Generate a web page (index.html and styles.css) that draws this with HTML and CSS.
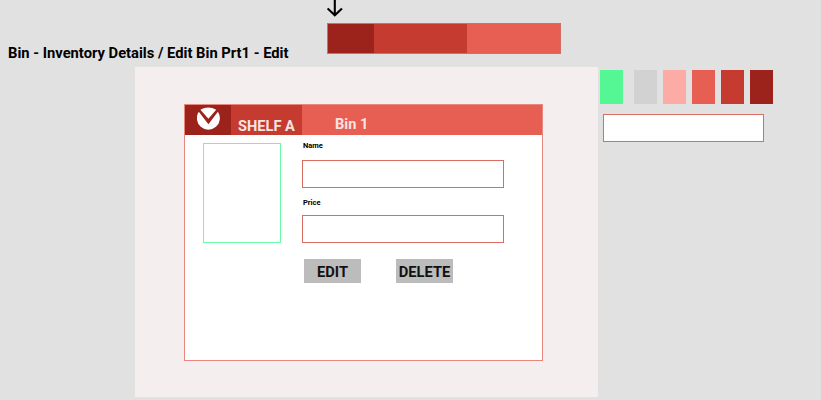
FILE: index.html
```html
<!DOCTYPE html>
<html lang="en">
<head>
<meta charset="utf-8">
<title>Bin - Inventory Details</title>
<link rel="stylesheet" href="styles.css">
</head>
<body>
<header class="top">
  <h1 class="title">Bin - Inventory Details / Edit Bin Prt1 - Edit</h1>
  <div class="guide">
    <svg class="arrow" width="18" height="18" viewBox="0 0 18 18"><path d="M7.8 0V15.2M.6 8.4L7.8 15.3L15 8.4" fill="none" stroke="#000" stroke-width="2.1"/></svg>
    <div class="strip"><span class="dark"></span><span class="mid"></span><span class="light"></span></div>
  </div>
</header>
<div class="workspace">
  <main class="panel">
    <section class="card">
      <div class="bar">
        <div class="logo dark">
          <svg width="24" height="24" viewBox="0 0 24 24"><path d="M3.4 2.8Q11.3 -2 19.2 2.8L11.4 11.8Z" fill="#fff"/><path d="M1.8 4.8L11.4 17.2L20.9 4.8A11.5 11.5 0 1 1 1.8 4.8Z" fill="#fff"/></svg>
        </div>
        <div class="shelf mid">SHELF A</div>
        <div class="bin light">Bin 1</div>
      </div>
      <div class="content">
        <div class="photo"></div>
        <form class="form">
          <label class="label" for="name">Name</label>
          <input class="field" id="name">
          <label class="label second" for="price">Price</label>
          <input class="field" id="price">
          <div class="actions"><button type="button">EDIT</button><button type="button">DELETE</button></div>
        </form>
      </div>
    </section>
  </main>
  <aside class="side">
    <div class="swatches"><span class="green"></span><span class="gray"></span><span class="pink"></span><span class="light"></span><span class="mid"></span><span class="dark"></span></div>
    <div class="sample"></div>
  </aside>
</div>
</body>
</html>
```
FILE: styles.css
```css
* { box-sizing: border-box; }
body { margin: 0; width: 821px; height: 400px; overflow: hidden; background: #e1e1e1; font-family: Roboto, "Liberation Sans", sans-serif; color: #111; }
.dark { background: #9c231b; }
.mid { background: #c53b30; }
.light { background: #e65f52; }
.green { background: #55f795; }
.gray { background: #d2d2d2; }
.pink { background: #fdaca5; }

.top { display: flex; height: 67px; }
.title { width: 327px; margin: 0; padding: 44px 0 0 8px; font-size: 14.74px; line-height: 18px; font-weight: 700; white-space: nowrap; color: #000; }
.guide { width: 234px; }
.arrow { display: block; margin-bottom: 5px; }
.strip { display: flex; height: 31px; border: 1px solid #d36c63; }
.strip .dark { width: 46px; }
.strip .mid { width: 93px; }
.strip .light { flex: 1; }

.workspace { display: flex; height: 330px; padding-left: 135px; }
.panel { width: 463px; padding: 37px 0 0 49px; background: #f5eeee; }
.card { width: 359px; height: 257px; border: 1px solid #e8877e; background: #fff; }
.bar { display: flex; height: 30px; color: #f7e4e2; font-weight: 700; font-size: 14.6px; line-height: 18px; white-space: nowrap; }
.logo { width: 46px; padding: 2px 0 0 12px; }
.logo svg { display: block; }
.shelf { width: 71px; padding: 12px 0 0 7px; }
.bin { flex: 1; padding: 10px 0 0 33px; }
.content { display: flex; padding: 9px 0 0 18px; }
.photo { width: 78px; height: 100px; margin-top: -1px; border: 1px solid #6bfaa9; }
.form { width: 202px; margin-left: 21px; }
.label { display: block; height: 10px; margin-bottom: 9px; margin-top: -3px; font-size: 7.5px; line-height: 10px; font-weight: 700; color: #000; padding-left: 1px; }
.second { margin: 10px 0 7px; }
.field { display: block; width: 202px; height: 28px; padding: 0 6px; border: 1px solid #d96c63; border-radius: 0; background: #fff; outline: 0; font: 12px Roboto, sans-serif; }
.actions { display: flex; gap: 35px; margin: 16px 0 0 2px; }
.actions button { flex: none; width: 57px; height: 24px; padding: 3px 0 0; border: 0; border-radius: 0; background: #bcbcbc; color: #111; font: 700 14.7px/21px Roboto, "Liberation Sans", sans-serif; }

.side { padding: 3px 0 0 2px; }
.swatches { display: flex; gap: 6px; height: 35px; }
.swatches span { width: 23px; height: 34px; }
.swatches .gray { margin-left: 5px; }
.sample { width: 161px; height: 28px; margin: 9px 0 0 3px; border: 1px solid #d96c63; background: #fff; }
```
